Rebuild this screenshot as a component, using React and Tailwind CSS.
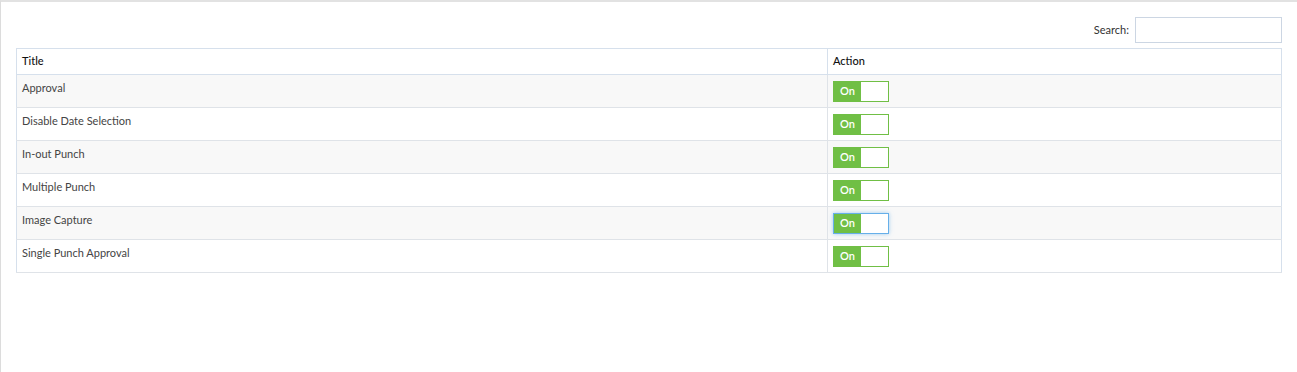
import React, { useState } from "react";

const rows = [
  "Approval",
  "Disable Date Selection",
  "In-out Punch",
  "Multiple Punch",
  "Image Capture",
  "Single Punch Approval",
];

function Toggle({ focused }) {
  const [on, setOn] = useState(true);
  return (
    <button
      onClick={() => setOn(!on)}
      className={
        "flex h-[21px] w-[56px] items-stretch border bg-white " +
        (focused ? "border-[#66afe9] shadow-[0_0_4px_rgba(102,175,233,0.6)]" : "border-[#70bf45]")
      }
    >
      <span className="flex w-[27px] items-center justify-center bg-[#70bf45] text-[11px] font-semibold text-white">
        {on ? "On" : "Off"}
      </span>
      <span className="flex-1" />
    </button>
  );
}

export default function App() {
  return (
    <div
      className="h-[372px] w-full border-l border-t-2 border-l-[#dcdcdc] border-t-[#e2e2e2] bg-white"
      style={{ fontFamily: "Lato, 'Open Sans', sans-serif" }}
    >
      <div className="px-[15px] pt-[15px]">
        <div className="flex items-center justify-end gap-[6px] text-[11px] text-[#333]">
          <span>Search:</span>
          <input className="h-[26px] w-[147px] border border-[#ccd6e3] outline-none" />
        </div>
        <table className="mt-[5px] w-full border-collapse border border-[#d6e0ec] text-[11px]">
          <thead>
            <tr className="h-[26px] border-b border-[#d6e0ec]">
              <th className="w-[811px] border-r border-[#d6e0ec] px-[5px] text-left font-medium text-[#111]">Title</th>
              <th className="px-[5px] text-left font-medium text-[#111]">Action</th>
            </tr>
          </thead>
          <tbody>
            {rows.map((r, i) => (
              <tr key={r} className={"h-[33px] border-b border-[#dfe3e8] " + (i % 2 === 0 ? "bg-[#f8f8f8]" : "bg-white")}>
                <td className="border-r border-[#dfe3e8] px-[5px] pt-[5px] align-top text-[#444]">{r}</td>
                <td className="px-[5px] align-middle">
                  <Toggle focused={i === 4} />
                </td>
              </tr>
            ))}
          </tbody>
        </table>
      </div>
    </div>
  );
}
